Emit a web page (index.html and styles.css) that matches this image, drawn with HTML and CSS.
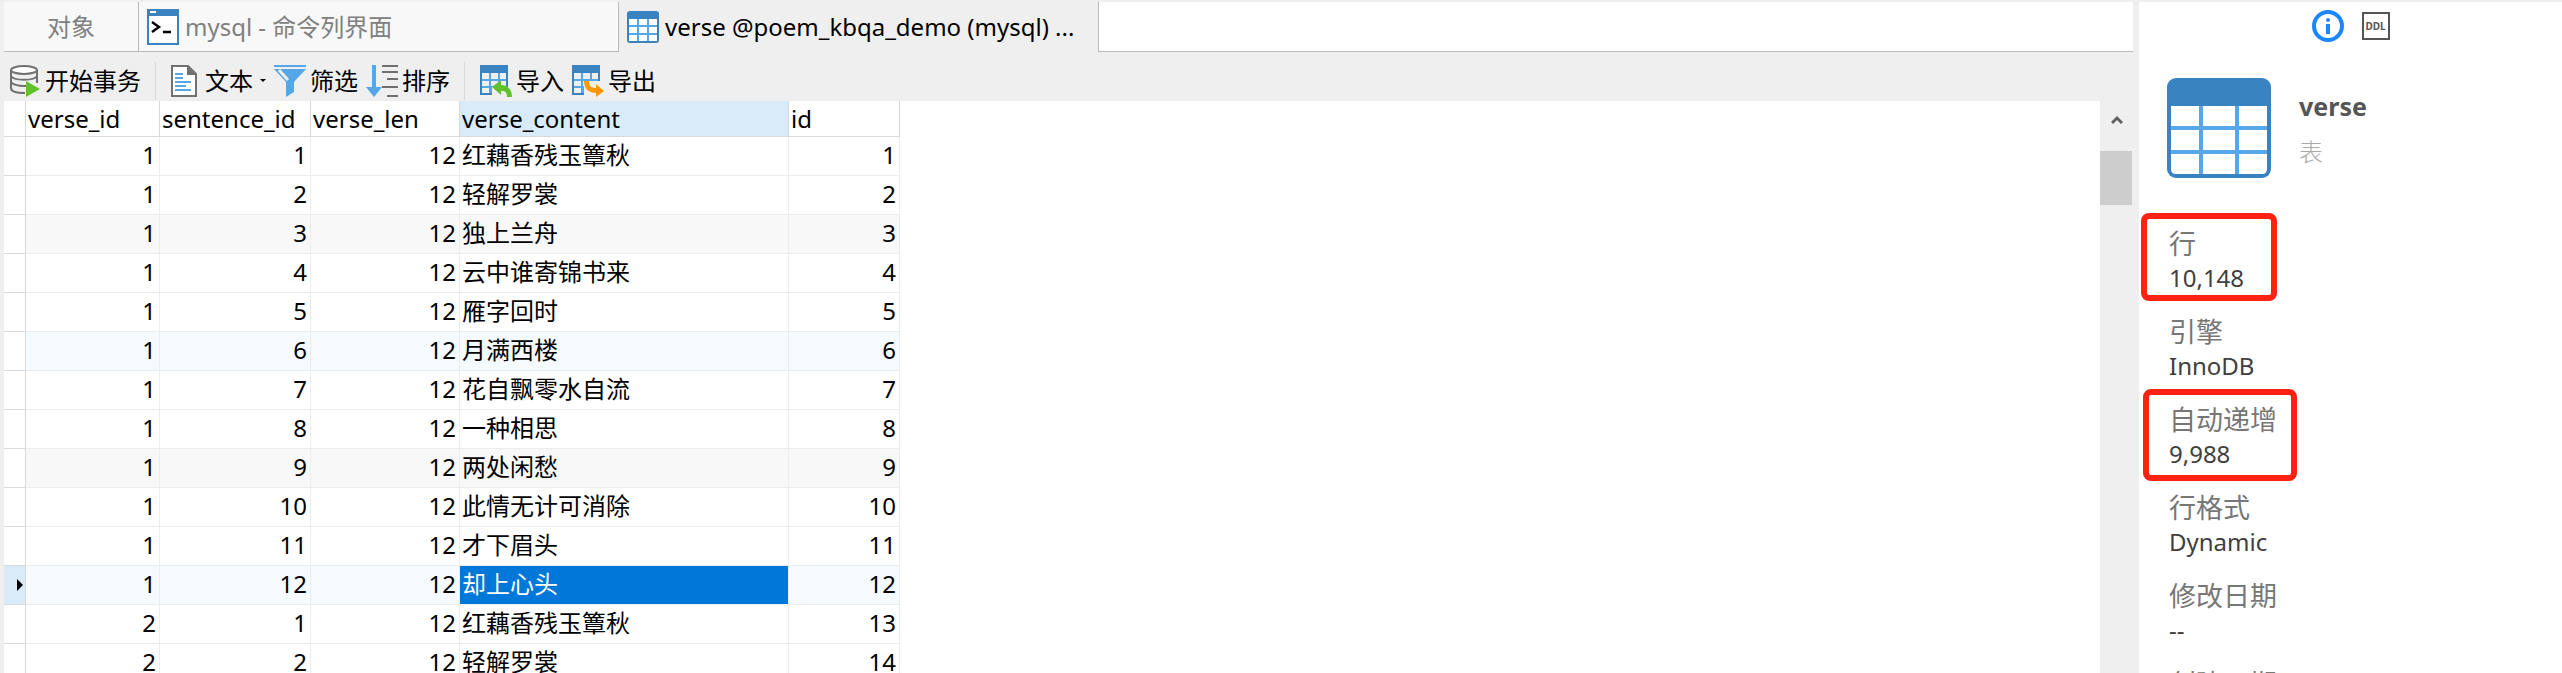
FILE: index.html
```html
<!DOCTYPE html>
<html lang="zh-CN">
<head>
    <meta charset="UTF-8">
    <meta name="viewport" content="width=device-width, initial-scale=1.0">
    <title>verse @poem_kbqa_demo (mysql)</title>
    <link rel="stylesheet" href="styles.css">
</head>
<body>
    <main class="workspace">
        <nav class="tabs">
            <button class="tab tab-objects" type="button">对象</button>
            <button class="tab tab-console" type="button">
                <svg class="tab-icon" viewBox="0 0 32 36" width="32" height="36">
                    <rect x="1" y="1" width="30" height="34" fill="#fff" stroke="#3984c0" stroke-width="2"/>
                    <path d="M0 0h32v7H0z" fill="#3984c0"/>
                    <path d="M3 3h6" stroke="#fff" stroke-width="2"/>
                    <path d="M5 13l7 5-7 5M16 23h8" fill="none" stroke="#000" stroke-width="2.5"/>
                </svg>
                <span>mysql - 命令列界面</span>
            </button>
            <button class="tab tab-active" type="button">
                <svg class="tab-icon" viewBox="0 0 32 32" width="32" height="32">
                    <rect width="32" height="32" rx="3" fill="#3984c0"/>
                    <path d="M2 8h28v22H2z" fill="#55a7e7"/>
                    <path d="M2 8h8v6H2zM12 8h8v6h-8zM22 8h8v6h-8zM2 16h8v6H2zM12 16h8v6h-8zM22 16h8v6h-8zM2 24h8v6H2zM12 24h8v6h-8zM22 24h8v6h-8z" fill="#fff"/>
                </svg>
                <span>verse @poem_kbqa_demo (mysql) ...</span>
            </button>
            <div class="tabs-rest"></div>
        </nav>

        <div class="toolbar">
            <button class="tool" type="button">
                <svg viewBox="0 0 31 32" width="31" height="32">
                    <path d="M1 5v18c0 3 5 5 14 5M27 5v13" fill="none" stroke="#707070" stroke-width="2"/>
                    <ellipse cx="14" cy="5" rx="13" ry="4" fill="#fff" stroke="#707070" stroke-width="2"/>
                    <path d="M1 11c2 5 24 5 26 0M1 17c3 4 14 5 20 3" fill="none" stroke="#707070" stroke-width="2"/>
                    <path d="M16 16l14 8-14 8z" fill="#5fc22d"/>
                </svg>
                开始事务
            </button>
            <span class="divider"></span>
            <button class="tool" type="button">
                <svg viewBox="0 0 30 32" width="30" height="32">
                    <path d="M1 1h16l8 8v22H1z" fill="#fff" stroke="#707070" stroke-width="2"/>
                    <path d="M16 1v9h9z" fill="#707070"/>
                    <path d="M4 9h8M4 13h8M4 17h16M4 21h11M4 25h16" stroke="#55a7e7" stroke-width="2"/>
                </svg>
                文本
                <span class="caret"></span>
            </button>
            <button class="tool" type="button">
                <svg viewBox="0 0 32 32" width="32" height="32">
                    <path d="M0 0h32v2H0zM0 4h32L20 17v10l-8 5V17z" fill="#55a7e7"/>
                    <path d="M5 5l9 10" stroke="#efefef" stroke-width="3"/>
                </svg>
                筛选
            </button>
            <button class="tool" type="button">
                <svg viewBox="0 0 32 32" width="32" height="32">
                    <path d="M6 0h4v22h6l-8 10-8-10h6z" fill="#55a7e7"/>
                    <path d="M16 1h16M16 7h16M21 14h11M16 22h16M21 31h11" stroke="#707070" stroke-width="2"/>
                </svg>
                排序
            </button>
            <span class="divider"></span>
            <button class="tool" type="button">
                <svg viewBox="0 0 32 32" width="32" height="32">
                    <path d="M0 0h28v30H0z" fill="#3984c0"/>
                    <path d="M2 8h24v20H2z" fill="#55a7e7"/>
                    <path d="M2 8h7v6H2zM11 8h7v6h-7zM20 8h6v6h-6zM2 16h7v5H2zM11 16h7v5h-7zM20 16h6v5h-6zM2 23h7v5H2zM12 22h20v10H12z" fill="#efefef"/>
                    <path d="M12 22l9-7v5c7 0 11 5 11 12h-5c0-5-2-6-6-6v4z" fill="#5fc22d"/>
                </svg>
                导入
            </button>
            <button class="tool" type="button">
                <svg viewBox="0 0 32 32" width="32" height="32">
                    <path d="M0 0h28v30H0z" fill="#3984c0"/>
                    <path d="M2 8h24v20H2z" fill="#55a7e7"/>
                    <path d="M2 8h7v6H2zM11 8h7v6h-7zM20 8h6v6h-6zM2 16h7v5H2zM11 16h17v5H11zM2 23h7v5H2zM12 21h20v11H12z" fill="#efefef"/>
                    <path d="M12 16h5c0 5 2 7 7 7v-4l8 7-8 6v-4c-8 0-12-5-12-12z" fill="#ff9800"/>
                </svg>
                导出
            </button>
        </div>

        <div class="grid-area">
            <div class="grid-scroll">
                <table class="grid">
                    <colgroup>
                        <col class="col-mark">
                        <col class="col-verse-id">
                        <col class="col-sentence-id">
                        <col class="col-verse-len">
                        <col class="col-content">
                        <col class="col-id">
                    </colgroup>
                    <thead>
                        <tr><th></th><th>verse_id</th><th>sentence_id</th><th>verse_len</th><th class="sorted">verse_content</th><th>id</th></tr>
                    </thead>
                    <tbody>
                        <tr><th></th><td>1</td><td>1</td><td>12</td><td class="content">红藕香残玉簟秋</td><td>1</td></tr>
                        <tr><th></th><td>1</td><td>2</td><td>12</td><td class="content">轻解罗裳</td><td>2</td></tr>
                        <tr class="shade"><th></th><td>1</td><td>3</td><td>12</td><td class="content">独上兰舟</td><td>3</td></tr>
                        <tr><th></th><td>1</td><td>4</td><td>12</td><td class="content">云中谁寄锦书来</td><td>4</td></tr>
                        <tr><th></th><td>1</td><td>5</td><td>12</td><td class="content">雁字回时</td><td>5</td></tr>
                        <tr class="tint"><th></th><td>1</td><td>6</td><td>12</td><td class="content">月满西楼</td><td>6</td></tr>
                        <tr><th></th><td>1</td><td>7</td><td>12</td><td class="content">花自飘零水自流</td><td>7</td></tr>
                        <tr><th></th><td>1</td><td>8</td><td>12</td><td class="content">一种相思</td><td>8</td></tr>
                        <tr class="shade"><th></th><td>1</td><td>9</td><td>12</td><td class="content">两处闲愁</td><td>9</td></tr>
                        <tr><th></th><td>1</td><td>10</td><td>12</td><td class="content">此情无计可消除</td><td>10</td></tr>
                        <tr><th></th><td>1</td><td>11</td><td>12</td><td class="content">才下眉头</td><td>11</td></tr>
                        <tr class="tint current"><th><span class="marker"></span></th><td>1</td><td>12</td><td>12</td><td class="content selected">却上心头</td><td>12</td></tr>
                        <tr><th></th><td>2</td><td>1</td><td>12</td><td class="content">红藕香残玉簟秋</td><td>13</td></tr>
                        <tr><th></th><td>2</td><td>2</td><td>12</td><td class="content">轻解罗裳</td><td>14</td></tr>
                    </tbody>
                </table>
            </div>
            <div class="scrollbar">
                <svg class="scroll-up" viewBox="0 0 12 10" width="12" height="10">
                    <path d="M1 8l5-5 5 5" fill="none" stroke="#606060" stroke-width="3"/>
                </svg>
                <div class="thumb"></div>
            </div>
        </div>
    </main>

    <aside class="info">
        <div class="info-modes">
            <button class="mode" type="button" aria-label="info">
                <svg viewBox="0 0 32 32" width="32" height="32">
                    <circle cx="16" cy="16" r="14" fill="none" stroke="#1a86ff" stroke-width="4"/>
                    <circle cx="16" cy="10" r="2" fill="#1a86ff"/>
                    <path d="M14 14h4v10h-4z" fill="#1a86ff"/>
                </svg>
            </button>
            <button class="mode mode-ddl" type="button">DDL</button>
        </div>
        <header class="info-head">
            <svg viewBox="0 0 104 100" width="104" height="100">
                <rect width="104" height="100" rx="9" fill="#3984c0"/>
                <path d="M4 28h96v63q0 5-5 5H9q-5 0-5-5z" fill="#fff"/>
                <path d="M34 28v68M70 28v68M4 50h96M4 74h96" stroke="#55a7e7" stroke-width="4"/>
            </svg>
            <div>
                <h1>verse</h1>
                <p>表</p>
            </div>
        </header>
        <dl class="props">
            <div class="prop marked marked-rows"><dt>行</dt><dd>10,148</dd></div>
            <div class="prop"><dt>引擎</dt><dd>InnoDB</dd></div>
            <div class="prop marked marked-auto"><dt>自动递增</dt><dd>9,988</dd></div>
            <div class="prop"><dt>行格式</dt><dd>Dynamic</dd></div>
            <div class="prop"><dt>修改日期</dt><dd>--</dd></div>
            <div class="prop"><dt>创建日期</dt><dd>--</dd></div>
        </dl>
    </aside>
</body>
</html>
```

FILE: styles.css
```css
*,
*::after {
    box-sizing: border-box;
}

body {
    margin: 0;
    height: 100vh;
    display: flex;
    overflow: hidden;
    border-top: 2px solid #b9b9b9;
    border-image: linear-gradient(#efefef 50%, #b9b9b9 50%) 2;
    background-color: #efefef;
    color: #000;
    font-family: "Noto Sans", "Noto Sans CJK SC", sans-serif;
    font-size: 24px;
    line-height: 32px;
}

button {
    margin: 0;
    padding: 0;
    border: none;
    background: none;
    color: inherit;
    font: inherit;
    cursor: pointer;
}

svg {
    flex: none;
    display: block;
}

/* left side: tabs, toolbar and data grid */
.workspace {
    flex: 1;
    min-width: 0;
    display: flex;
    flex-direction: column;
    padding-left: 4px;
}

.tabs {
    display: flex;
    height: 50px;
    margin-right: 6px;
}

.tab {
    display: flex;
    align-items: center;
    gap: 6px;
    padding: 0 8px;
    border-right: 1px solid #b9b9b9;
    border-bottom: 1px solid #b9b9b9;
    background-color: #f8f8f8;
    color: #808080;
    white-space: nowrap;
}

.tab-objects {
    width: 135px;
    justify-content: center;
}

.tab-console {
    width: 480px;
}

.tab-active {
    width: 480px;
    border-bottom: none;
    background-color: #efefef;
    color: #000;
}

.tabs-rest {
    flex: 1;
    border-bottom: 1px solid #b9b9b9;
    background-color: #fff;
}

.toolbar {
    display: flex;
    align-items: center;
    height: 49px;
    padding: 8px 6px 0;
}

.tool {
    display: flex;
    align-items: center;
    gap: 4px;
    margin-right: 8px;
    white-space: nowrap;
}

.divider {
    width: 1px;
    height: 38px;
    margin: 0 15px 0 6px;
    background-color: #d8d8d8;
}

.caret {
    margin-left: 3px;
    border: 3px solid transparent;
    border-top-color: #000;
    border-bottom: none;
}

.grid-area {
    flex: 1;
    min-height: 0;
    display: flex;
    margin-right: 6px;
}

.grid-scroll {
    flex: 1;
    overflow: hidden;
    background-color: #fff;
}

.grid {
    table-layout: fixed;
    width: 896px;
    border-collapse: separate;
    border-spacing: 0;
}

.col-mark { width: 22px; }
.col-verse-id { width: 134px; }
.col-sentence-id { width: 151px; }
.col-verse-len { width: 149px; }
.col-content { width: 329px; }
.col-id { width: 111px; }

.grid th,
.grid td {
    height: 39px;
    padding: 0 3px 2px 2px;
    border-right: 1px solid #ececec;
    border-bottom: 1px solid #ececec;
    font-weight: normal;
    text-align: right;
    white-space: nowrap;
}

.grid th {
    border-color: #d8d8d8;
}

.grid thead th {
    height: 36px;
    padding-bottom: 0;
    text-align: left;
}

.grid thead .sorted {
    background-color: #d9eaf8;
}

.grid tbody th {
    padding: 0 2px;
}

.grid .content {
    text-align: left;
}

.shade td {
    background-color: #f8f8f8;
}

.tint td {
    background-color: #f5faff;
}

.current th {
    background-color: #d9eaf8;
}

.grid .selected {
    background-color: #0078d9;
    color: #fff;
}

.marker {
    display: block;
    width: 0;
    margin-left: auto;
    border: 6px solid transparent;
    border-left-color: #000;
    border-right: none;
}

.scrollbar {
    width: 33px;
    padding-right: 1px;
}

.scroll-up {
    margin: 14px auto 26px 11px;
}

.thumb {
    height: 54px;
    background-color: #cdcdcd;
}

/* right side: object information */
.info {
    width: 423px;
    padding: 8px 28px 0;
    background-color: #fff;
}

.info-modes {
    display: flex;
    align-items: center;
    justify-content: center;
    gap: 18px;
    height: 32px;
}

.mode-ddl {
    width: 28px;
    height: 28px;
    border: 2px solid #555;
    color: #555;
    font-size: 10px;
    font-weight: bold;
    line-height: 24px;
}

.info-head {
    display: flex;
    gap: 28px;
    margin: 36px 0;
}

.info-head h1 {
    margin: 12px 0 14px;
    color: #555;
    font-size: 25px;
    line-height: 32px;
}

.info-head p {
    margin: 0;
    color: #aaa;
    font-weight: 300;
}

.props {
    margin: 0;
}

.prop {
    position: relative;
    height: 88px;
    padding: 12px 2px 0;
}

.prop dt {
    color: #777;
    font-size: 27px;
    line-height: 36px;
}

.prop dd {
    margin: 0;
    color: #404040;
}

/* red frame around the row counters */
.marked::after {
    content: "";
    position: absolute;
    top: -1px;
    left: -26px;
    width: 136px;
    height: 88px;
    border: 6px solid #ff2112;
    border-radius: 8px;
}

.marked-auto::after {
    left: -24px;
    width: 154px;
    height: 92px;
}
```
